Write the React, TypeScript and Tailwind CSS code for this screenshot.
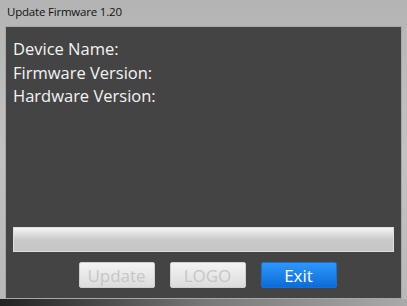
export default function App() {
  return (
    <div
      className="w-[407px] h-[306px] overflow-hidden bg-gradient-to-b from-[#b4b4b4] via-[#c2c2c2] to-[#b8b8b8] flex flex-col"
      style={{ fontFamily: '"Open Sans", "Noto Sans", sans-serif' }}
    >
      {/* title bar */}
      <div className="h-[26px] pl-[7px] pt-[4px] text-[11.5px] leading-[16px] tracking-[-0.2px] text-[#111]">
        Update Firmware 1.20
      </div>

      {/* client area */}
      <div className="mx-[5px] h-[273px] border border-[#a8a8a8] bg-[#444444] flex flex-col px-[7px]">
        <div className="pt-[10px] text-[16.5px] leading-[23.5px] text-[#f4f4f4]">
          <div>Device Name:</div>
          <div>Firmware Version:</div>
          <div>Hardware Version:</div>
        </div>

        <div className="flex-1" />

        {/* progress bar */}
        <div className="h-[25px] border border-[#dedede] bg-gradient-to-b from-[#f4f4f4] via-[#cacaca] to-[#c6c6c6]" />

        <div className="flex justify-center gap-[15px] pt-[10px] pb-[10px] pl-[8px]">
          <button className="w-[76px] h-[26px] rounded-[2px] border border-[#cfcfcf] bg-gradient-to-b from-[#f4f4f4] to-[#dcdcdc] text-[17px] leading-none text-[#c6c6c6]">
            Update
          </button>
          <button className="w-[76px] h-[26px] rounded-[2px] border border-[#cfcfcf] bg-gradient-to-b from-[#f4f4f4] to-[#dcdcdc] text-[17px] leading-none text-[#c6c6c6]">
            LOGO
          </button>
          <button className="w-[76px] h-[26px] rounded-[2px] border border-[#1a6fcf] bg-gradient-to-b from-[#2f97fb] to-[#0a6cd8] text-[17px] leading-none text-white">
            Exit
          </button>
        </div>
      </div>

      <div className="flex-1 bg-gradient-to-r from-[#222] via-[#777] to-[#aaa]" />
    </div>
  );
}
